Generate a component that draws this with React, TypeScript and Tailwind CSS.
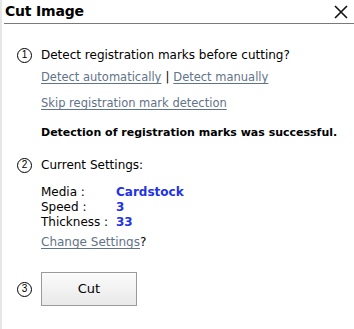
const linkCls = 'text-[#5f7389] underline underline-offset-2 decoration-[#5f7389]';

function Step({ n }: { n: string }) {
  return (
    <span
      className="flex h-[15px] w-[15px] shrink-0 items-center justify-center rounded-full border-[1.5px] border-black text-[10px] leading-none text-black"
      style={{ fontFamily: '"Liberation Sans", Arial, sans-serif' }}
    >
      {n}
    </span>
  );
}

export default function App() {
  return (
    <div
      className="h-[329px] w-[354px] border-l-2 border-[#e6e6e6] bg-white text-black"
      style={{ fontFamily: '"DejaVu Sans", Verdana, sans-serif' }}
    >
      <div className="ml-[2px] flex h-[24px] items-center justify-between border-b border-[#7a7a7a] pl-[1px] pr-[5px]">
        <span className="text-[14px] font-bold tracking-[-0.2px]">Cut Image</span>
        <svg width="16" height="16" viewBox="0 0 16 16" className="mt-[1px]">
          <path d="M2 2 L14 14 M14 2 L2 14" stroke="#111" strokeWidth="1.6" />
        </svg>
      </div>

      <div className="pl-[15px] pt-[22px] text-[12px]">
        <div className="flex items-center gap-[9px]">
          <Step n="1" />
          <span className="text-[12px]">Detect registration marks before cutting?</span>
        </div>

        <div className="ml-[24px] mt-[5px] flex flex-col">
          <div className="text-[11.5px]">
            <span className={linkCls}>Detect automatically</span>
            <span className="mx-[4px]">|</span>
            <span className={linkCls}>Detect manually</span>
          </div>
          <div className="mt-[9px] text-[11.5px]">
            <span className={linkCls}>Skip registration mark detection</span>
          </div>
          <div className="mt-[12px] text-[11px] font-bold">
            Detection of registration marks was successful.
          </div>
        </div>

        <div className="mt-[15px] flex items-center gap-[9px]">
          <Step n="2" />
          <span className="text-[12px]">Current Settings:</span>
        </div>

        <div className="ml-[24px] mt-[11px] text-[12px] leading-[15px]">
          <div className="grid grid-cols-[75px_auto]">
            <span>Media :</span>
            <span className="font-bold text-[#2233e6]">Cardstock</span>
            <span>Speed :</span>
            <span className="font-bold text-[#2233e6]">3</span>
            <span>Thickness :</span>
            <span className="font-bold text-[#2233e6]">33</span>
          </div>
          <div className="mt-[5px]">
            <span className={linkCls}>Change Settings</span>?
          </div>
        </div>

        <div className="mt-[22px] flex items-center gap-[9px]">
          <Step n="3" />
          <button className="flex h-[34px] w-[96px] items-center justify-center border border-[#9a9a9a] bg-gradient-to-b from-[#fbfbfb] to-[#e9e9e9] text-[13px]">
            Cut
          </button>
        </div>
      </div>
    </div>
  );
}
